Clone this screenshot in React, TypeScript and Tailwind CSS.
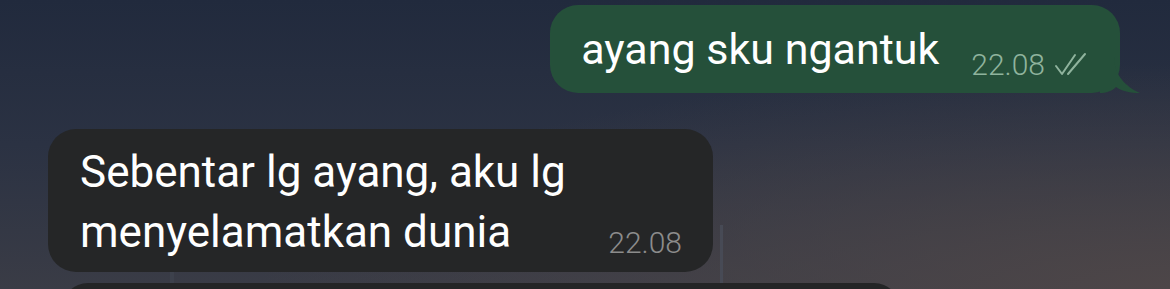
import React from 'react';

const DoubleCheck: React.FC = () => (
  <svg width="34" height="24" viewBox="0 0 34 24" fill="none" className="ml-[8px] mt-[29px]">
    <path d="M3 14 L9 22 L22 3" stroke="#8fb39d" strokeWidth="2" strokeLinecap="round" strokeLinejoin="round" />
    <path d="M15 22 L32 2" stroke="#8fb39d" strokeWidth="2" strokeLinecap="round" />
  </svg>
);

const OutgoingBubble: React.FC<{ text: string; time: string }> = ({ text, time }) => (
  <div className="relative flex items-start rounded-[28px] bg-[#25503a] h-[88px] pl-[31px] pr-[33px] pt-[18px]">
    <span className="text-[43px] leading-[52px] text-white">{text}</span>
    <span className="ml-[32px] mt-[27px] text-[30px] leading-none font-light text-[#8fb39d]">{time}</span>
    <DoubleCheck />
    {/* ekor bubble */}
    <svg className="absolute right-[-20px] bottom-0" width="40" height="36" viewBox="0 0 40 36">
      <path d="M0 0 L14 0 C14 18 26 30 40 36 C30 36 22 34 16 30 C12 34 6 36 0 36 Z" fill="#25503a" />
    </svg>
  </div>
);

const IncomingBubble: React.FC<{ lines: string[]; time: string }> = ({ lines, time }) => (
  <div className="flex items-end rounded-[28px] bg-[#252627] w-[665px] h-[143px] pl-[32px] pr-[31px] pt-[13px] pb-[10px]">
    <div className="flex flex-col flex-1 text-[44px] leading-[60px] text-white">
      {lines.map((l) => (
        <span key={l}>{l}</span>
      ))}
    </div>
    <span className="mb-[4px] text-[30px] leading-none font-light text-[#8c8c8c]">{time}</span>
  </div>
);

export default function App() {
  return (
    <div
      className="relative w-[1170px] h-[289px] overflow-hidden bg-[radial-gradient(ellipse_at_100%_100%,#4d4648_0%,transparent_55%),linear-gradient(to_bottom,#212a3d,#2b3243_50%,#3a3c46)]"
      style={{ fontFamily: 'Roboto, "Liberation Sans", sans-serif' }}
    >
      {/* garis tipis di foto latar */}
      <div className="absolute left-[720px] top-[225px] w-[3px] h-[64px] bg-[#474a55]" />
      <div className="absolute left-[170px] top-[270px] w-[4px] h-[19px] bg-[#3d414c]" />

      <div className="relative flex flex-col pt-[5px]">
        <div className="flex justify-end pr-[50px]">
          <OutgoingBubble text="ayang sku ngantuk" time="22.08" />
        </div>
        <div className="pl-[48px] mt-[36px]">
          <IncomingBubble lines={['Sebentar lg ayang, aku lg', 'menyelamatkan dunia']} time="22.08" />
        </div>
        <div className="pl-[62px] mt-[11px]">
          <div className="w-[838px] h-[40px] rounded-t-[26px] bg-[#242526]" />
        </div>
      </div>
    </div>
  );
}
